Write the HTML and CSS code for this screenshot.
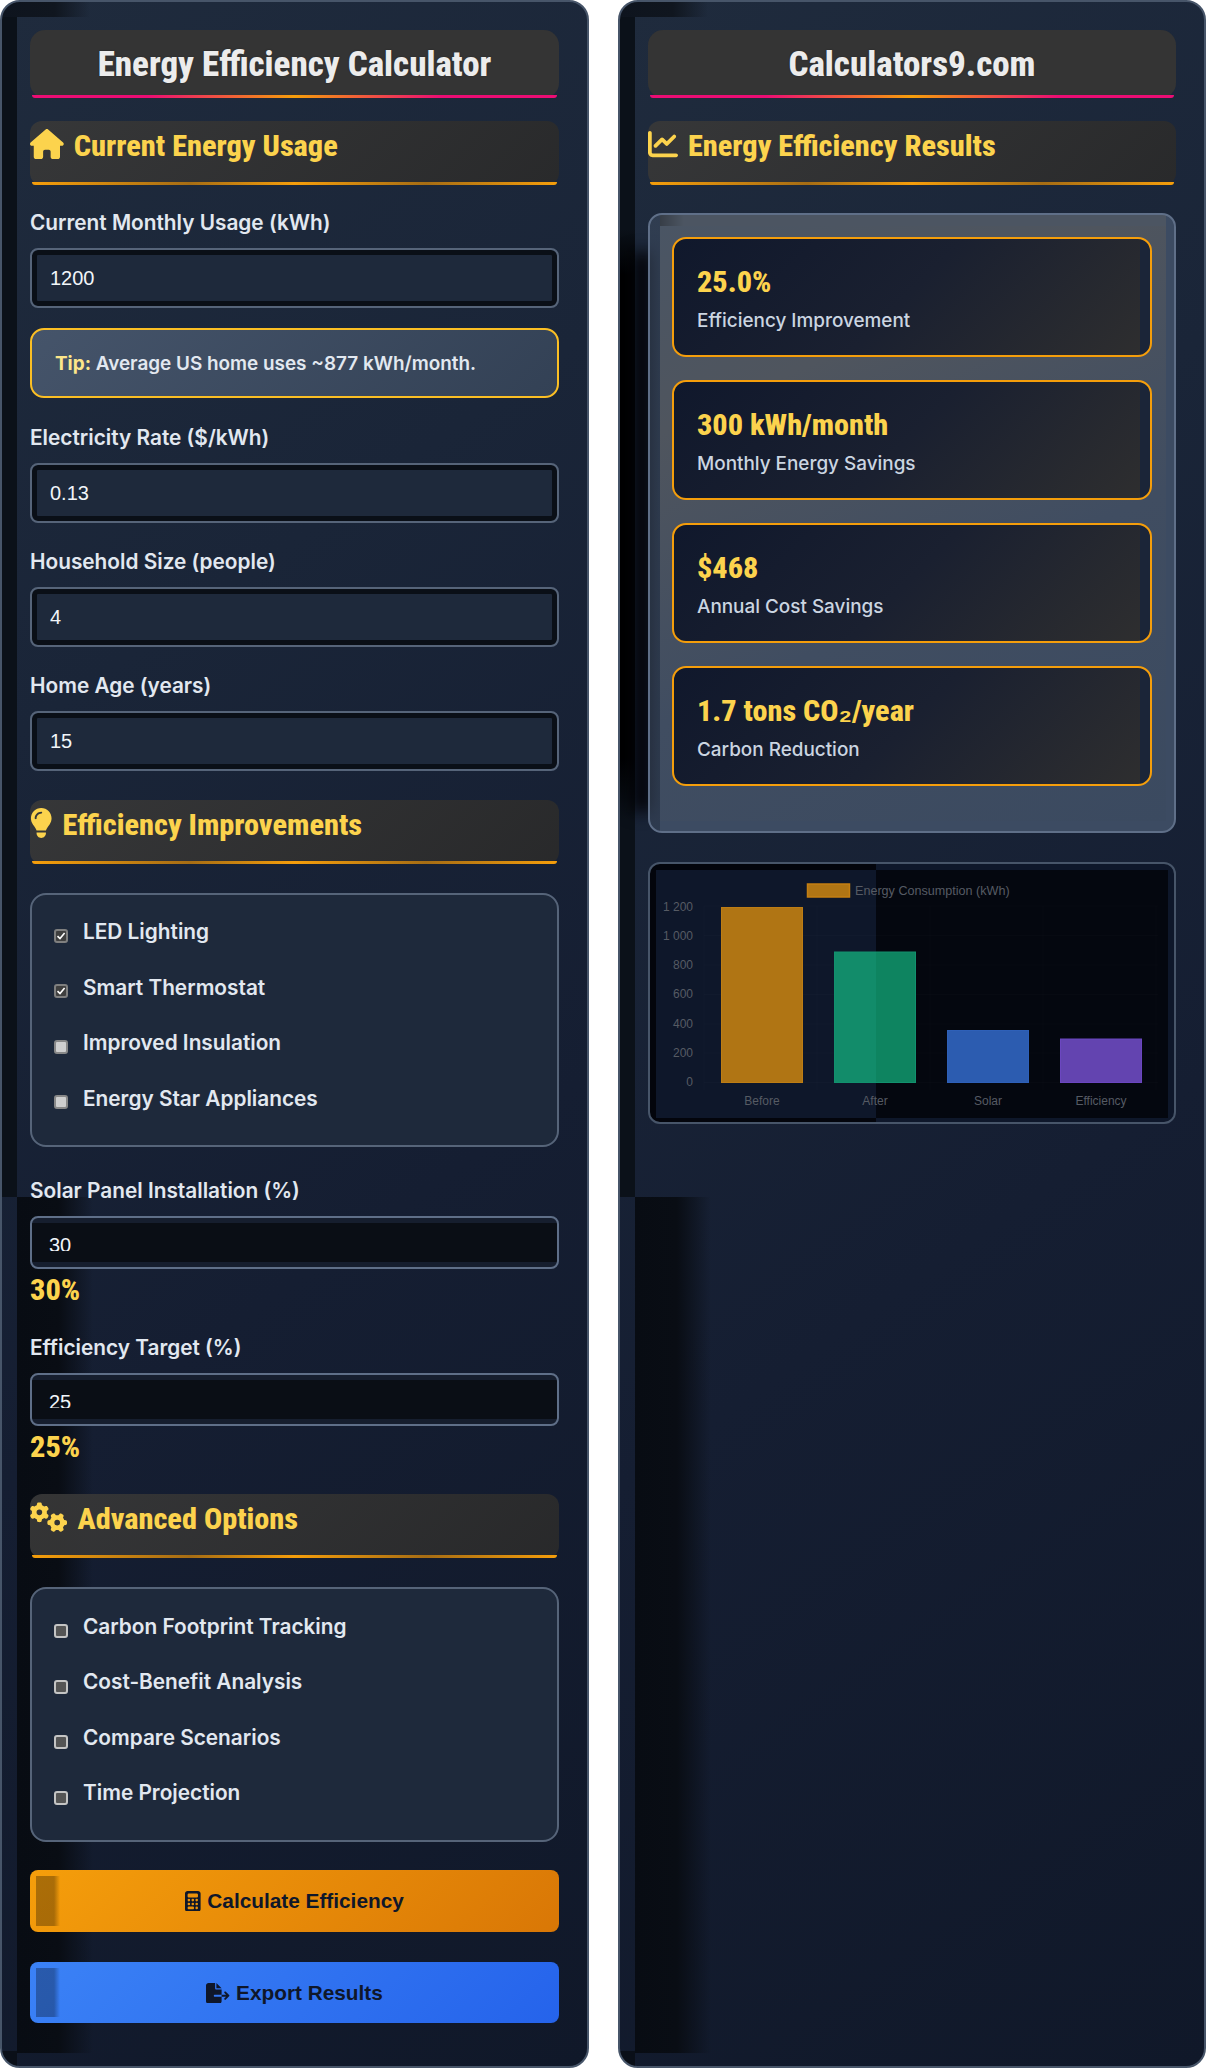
FILE: index.html
```html
<!DOCTYPE html>
<html lang="en">
<head>
<meta charset="utf-8">
<title>Energy Efficiency Calculator</title>
<link rel="stylesheet" href="styles.css">
</head>
<body>
<main class="layout">
  <section class="panel panel-left">
    <h1 class="title">Energy Efficiency Calculator</h1>
    <h2 class="section"><svg class="ico" viewBox="0 0 576 512"><path d="M575.8 255.5c0 18-15 32.1-32 32.1h-32l.7 160.2c0 2.7-.2 5.4-.5 8.1V472c0 22.1-17.9 40-40 40H456c-1.1 0-2.2 0-3.3-.1c-1.4 .1-2.8 .1-4.2 .1H416 392c-22.1 0-40-17.9-40-40V448 384c0-17.7-14.3-32-32-32H256c-17.7 0-32 14.3-32 32v64 24c0 22.1-17.9 40-40 40H160 128.1c-1.5 0-3-.1-4.5-.2c-1.2 .1-2.4 .2-3.6 .2H104c-22.1 0-40-17.9-40-40V360c0-.9 0-1.9 .1-2.8V287.6H32c-18 0-32-14-32-32.1c0-9 3-17 10-24L266.4 8c7-7 15-8 22-8s15 2 21 7L564.8 231.5c8 7 12 15 11 24z"/></svg>Current Energy Usage</h2>
    <div class="field field-first">
      <label class="label">Current Monthly Usage (kWh)</label>
      <input class="input" type="text" value="1200">
      <p class="tip"><strong>Tip:</strong> Average US home uses ~877 kWh/month.</p>
    </div>
    <div class="field">
      <label class="label">Electricity Rate ($/kWh)</label>
      <input class="input" type="text" value="0.13">
    </div>
    <div class="field">
      <label class="label">Household Size (people)</label>
      <input class="input" type="text" value="4">
    </div>
    <div class="field">
      <label class="label">Home Age (years)</label>
      <input class="input" type="text" value="15">
    </div>
    <h2 class="section section-next"><svg class="ico" viewBox="0 0 384 512"><path d="M272 384c9.6-31.9 29.5-59.1 49.2-86.2l0 0c5.2-7.1 10.4-14.2 15.4-21.4c19.8-28.5 31.4-63 31.4-100.3C368 78.8 289.2 0 192 0S16 78.8 16 176c0 37.3 11.6 71.9 31.4 100.3c5 7.2 10.2 14.3 15.4 21.4l0 0c19.8 27.1 39.7 54.4 49.2 86.2H272zM192 512c44.2 0 80-35.8 80-80V416H112v16c0 44.2 35.8 80 80 80zM112 176c0 8.8-7.2 16-16 16s-16-7.2-16-16c0-61.9 50.1-112 112-112c8.8 0 16 7.2 16 16s-7.2 16-16 16c-44.2 0-80 35.8-80 80z"/></svg>Efficiency Improvements</h2>
    <div class="checks">
      <div class="check"><span class="box on"><svg viewBox="0 0 10 10"><path d="M1.5 5.2 4 7.6 8.6 2"/></svg></span>LED Lighting</div>
      <div class="check"><span class="box on"><svg viewBox="0 0 10 10"><path d="M1.5 5.2 4 7.6 8.6 2"/></svg></span>Smart Thermostat</div>
      <div class="check"><span class="box off"></span>Improved Insulation</div>
      <div class="check"><span class="box off"></span>Energy Star Appliances</div>
    </div>
    <div class="field-range">
      <label class="label">Solar Panel Installation (%)</label>
      <div class="input input-range"><span class="range-num">30</span></div>
      <div class="range-value">30%</div>
    </div>
    <div class="field-range2">
      <label class="label">Efficiency Target (%)</label>
      <div class="input input-range"><span class="range-num">25</span></div>
      <div class="range-value">25%</div>
    </div>
    <h2 class="section section-adv"><svg class="ico" viewBox="0 0 640 512"><path d="M308.5 135.3c7.1-6.3 9.9-16.2 6.2-25c-2.3-5.3-4.8-10.5-7.6-15.5L304 89.4c-3-5-6.3-9.9-9.8-14.6c-5.7-7.6-15.7-10.1-24.7-7.1l-28.2 9.3c-10.7-8.8-23-16-36.2-20.9L199 27.1c-1.9-9.3-9.1-16.7-18.5-17.8C173.9 8.4 167.2 8 160.4 8h-.7c-6.8 0-13.5 .4-20.1 1.2c-9.4 1.1-16.6 8.6-18.5 17.8L115 56.1c-13.3 5-25.5 12.1-36.2 20.9L50.5 67.8c-9-3-19-.5-24.7 7.1c-3.5 4.7-6.8 9.6-9.9 14.6l-3 5.3c-2.8 5-5.3 10.2-7.6 15.6c-3.7 8.7-.9 18.6 6.2 25l22.2 19.8C32.6 161.9 32 168.9 32 176s.6 14.1 1.7 20.9L11.5 216.7c-7.1 6.3-9.9 16.2-6.2 25c2.3 5.3 4.8 10.5 7.6 15.6l3 5.2c3 5.1 6.3 9.9 9.9 14.6c5.7 7.6 15.7 10.1 24.7 7.1l28.2-9.3c10.7 8.8 23 16 36.2 20.9l6.1 29.1c1.9 9.3 9.1 16.7 18.5 17.8c6.7 .8 13.5 1.2 20.4 1.2s13.7-.4 20.4-1.2c9.4-1.1 16.6-8.6 18.5-17.8l6.1-29.1c13.3-5 25.5-12.1 36.2-20.9l28.2 9.3c9 3 19 .5 24.7-7.1c3.5-4.7 6.8-9.5 9.8-14.6l3.1-5.4c2.8-5 5.3-10.2 7.6-15.5c3.7-8.7 .9-18.6-6.2-25l-22.2-19.8c1.1-6.8 1.7-13.8 1.7-20.9s-.6-14.1-1.7-20.9l22.2-19.8zM112 176a48 48 0 1 1 96 0 48 48 0 1 1 -96 0zM504.7 500.5c6.3 7.1 16.2 9.9 25 6.2c5.3-2.3 10.5-4.8 15.5-7.6l5.4-3.1c5-3 9.9-6.3 14.6-9.8c7.6-5.7 10.1-15.7 7.1-24.7l-9.3-28.2c8.8-10.7 16-23 20.9-36.2l29.1-6.1c9.3-1.9 16.7-9.1 17.8-18.5c.8-6.7 1.2-13.5 1.2-20.4s-.4-13.7-1.2-20.4c-1.1-9.4-8.6-16.6-17.8-18.5L583.9 307c-5-13.3-12.1-25.5-20.9-36.2l9.3-28.2c3-9 .5-19-7.1-24.7c-4.7-3.5-9.6-6.8-14.6-9.9l-5.3-3c-5-2.8-10.2-5.3-15.6-7.6c-8.7-3.7-18.6-.9-25 6.2l-19.8 22.2c-6.8-1.1-13.8-1.7-20.9-1.7s-14.1 .6-20.9 1.7l-19.8-22.2c-6.3-7.1-16.2-9.9-25-6.2c-5.3 2.3-10.5 4.8-15.6 7.6l-5.2 3c-5.1 3-9.9 6.3-14.6 9.9c-7.6 5.7-10.1 15.7-7.1 24.7l9.3 28.2c-8.8 10.7-16 23-20.9 36.2L315.1 313c-9.3 1.9-16.7 9.1-17.8 18.5c-.8 6.7-1.2 13.5-1.2 20.4s.4 13.7 1.2 20.4c1.1 9.4 8.6 16.6 17.8 18.5l29.1 6.1c5 13.3 12.1 25.5 20.9 36.2l-9.3 28.2c-3 9-.5 19 7.1 24.7c4.7 3.5 9.5 6.8 14.6 9.8l5.4 3.1c5 2.8 10.2 5.3 15.5 7.6c8.7 3.7 18.6 .9 25-6.2l19.8-22.2c6.8 1.1 13.8 1.7 20.9 1.7s14.1-.6 20.9-1.7l19.8 22.2zM464 304a48 48 0 1 1 0 96 48 48 0 1 1 0-96z"/></svg>Advanced Options</h2>
    <div class="checks checks-adv">
      <div class="check"><span class="box dim"></span>Carbon Footprint Tracking</div>
      <div class="check"><span class="box dim"></span>Cost-Benefit Analysis</div>
      <div class="check"><span class="box dim"></span>Compare Scenarios</div>
      <div class="check"><span class="box dim"></span>Time Projection</div>
    </div>
    <button class="btn btn-calc" type="button"><svg class="btn-ico" viewBox="0 0 384 512"><path d="M64 0C28.7 0 0 28.7 0 64V448c0 35.3 28.7 64 64 64H320c35.3 0 64-28.7 64-64V64c0-35.3-28.7-64-64-64H64zM96 64H288c17.7 0 32 14.3 32 32v32c0 17.7-14.3 32-32 32H96c-17.7 0-32-14.3-32-32V96c0-17.7 14.3-32 32-32zm32 160a32 32 0 1 1 -64 0 32 32 0 1 1 64 0zM96 352a32 32 0 1 1 0-64 32 32 0 1 1 0 64zM64 416c0-17.7 14.3-32 32-32h96c17.7 0 32 14.3 32 32s-14.3 32-32 32H96c-17.7 0-32-14.3-32-32zM192 256a32 32 0 1 1 0-64 32 32 0 1 1 0 64zm32 64a32 32 0 1 1 -64 0 32 32 0 1 1 64 0zm64-64a32 32 0 1 1 0-64 32 32 0 1 1 0 64zm32 64a32 32 0 1 1 -64 0 32 32 0 1 1 64 0zM288 448a32 32 0 1 1 0-64 32 32 0 1 1 0 64z"/></svg>Calculate Efficiency</button>
    <button class="btn btn-export" type="button"><svg class="btn-ico" viewBox="0 0 576 512"><path d="M0 64C0 28.7 28.7 0 64 0H224V128c0 17.7 14.3 32 32 32H384V288H216c-13.3 0-24 10.7-24 24s10.7 24 24 24H384V448c0 35.3-28.7 64-64 64H64c-35.3 0-64-28.7-64-64V64zM384 336V288H494.1l-39-39c-9.4-9.4-9.4-24.6 0-33.9s24.6-9.4 33.9 0l80 80c9.4 9.4 9.4 24.6 0 33.9l-80 80c-9.4 9.4-24.6 9.4-33.9 0s-9.4-24.6 0-33.9l39-39H384zm0-208H256V0L384 128z"/></svg>Export Results</button>
  </section>

  <section class="panel panel-right">
    <h1 class="title">Calculators9.com</h1>
    <h2 class="section"><svg class="ico" viewBox="0 0 512 512"><path d="M64 64c0-17.7-14.3-32-32-32S0 46.3 0 64V400c0 44.2 35.8 80 80 80H480c17.7 0 32-14.3 32-32s-14.3-32-32-32H80c-8.8 0-16-7.2-16-16V64zm406.6 86.6c12.5-12.5 12.5-32.8 0-45.3s-32.8-12.5-45.3 0L320 210.7l-57.4-57.4c-12.5-12.5-32.8-12.5-45.3 0l-112 112c-12.5 12.5-12.5 32.8 0 45.3s32.8 12.5 45.3 0L240 221.3l57.4 57.4c12.5 12.5 32.8 12.5 45.3 0l128-128z"/></svg>Energy Efficiency Results</h2>
    <div class="results">
      <div class="card"><div class="card-value">25.0%</div><div class="card-label">Efficiency Improvement</div></div>
      <div class="card"><div class="card-value">300 kWh/month</div><div class="card-label">Monthly Energy Savings</div></div>
      <div class="card"><div class="card-value">$468</div><div class="card-label">Annual Cost Savings</div></div>
      <div class="card"><div class="card-value">1.7 tons CO<span class="sub">₂</span>/year</div><div class="card-label">Carbon Reduction</div></div>
    </div>
    <div class="chart">
      <svg class="chart-svg" viewBox="0 0 524 258">
        <g class="grid">
          <path d="M54 42H508M54 71.500H508M54 101H508M54 130.500H508M54 160H508M54 189H508M54 218.500H508"/>
          <path d="M54 42V226M167 42V226M280 42V226M393 42V226M506 42V226"/>
        </g>
        <rect class="swatch" x="157.500" y="20" width="42" height="13"/>
        <text class="legend" x="205" y="31">Energy Consumption (kWh)</text>
        <g class="ticks">
          <text x="43" y="46.500">1 200</text>
          <text x="43" y="76">1 000</text>
          <text x="43" y="105">800</text>
          <text x="43" y="134">600</text>
          <text x="43" y="163.500">400</text>
          <text x="43" y="193">200</text>
          <text x="43" y="221.500">0</text>
        </g>
        <rect class="bar b1" x="71.500" y="43.500" width="81" height="175"/>
        <rect class="bar b2" x="184.500" y="88" width="81" height="130.500"/>
        <rect class="bar b2b" x="226" y="88.500" width="39" height="129.500"/>
        <rect class="bar b3" x="297.500" y="166.500" width="81" height="52"/>
        <rect class="bar b4" x="410.500" y="175" width="81" height="43.500"/>
        <g class="xlabels">
          <text x="112" y="241">Before</text>
          <text x="225" y="241">After</text>
          <text x="338" y="241">Solar</text>
          <text x="451" y="241">Efficiency</text>
        </g>
      </svg>
    </div>
  </section>
</main>
</body>
</html>
```
FILE: styles.css
```css
* { box-sizing: border-box; }
html, body { margin: 0; padding: 0; }
body {
  width: 1206px;
  height: 2068px;
  background: #fff;
  font-family: "Inter", "Liberation Sans", sans-serif;
  line-height: 1.6;
  color: #e2e8f0;
  overflow: hidden;
}
.layout {
  display: grid;
  grid-template-columns: 589px 588px;
  column-gap: 29px;
  height: 2068px;
}
.panel {
  position: relative;
  isolation: isolate;
  border: 2px solid #475569;
  border-radius: 20px;
  padding: 28px;
  min-width: 0;
  display: flex;
  flex-direction: column;
  background-repeat: no-repeat;
  overflow: hidden;
}
.panel-left {
  background-image:
    linear-gradient(#0b1119, #0b1119),
    linear-gradient(90deg, #0e141e 0, #10161f 60%, rgba(16,22,31,0) 100%),
    linear-gradient(90deg, #080c13 0, #090d14 55%, rgba(9,13,20,0) 100%),
    linear-gradient(#0a0f18, #0a0f18),
    linear-gradient(145deg, #1f2b3d 0%, #1a2538 30%, #151e32 60%, #101829 100%);
  background-size: 15px 1180px, 88px 15px, 76px 856px, 15px 15px, 100% 100%;
  background-position: 0 15px, 0 0, 15px 1195px, 0 2049px, 0 0;
}
.panel-right {
  background-image:
    linear-gradient(#0b1119 0, #0b1119 18%, #000 22%, #000 62.500%, #0b1119 68%, #0b1119 100%),
    linear-gradient(90deg, #0e141e 0, #10161f 60%, rgba(16,22,31,0) 100%),
    linear-gradient(90deg, #080c13 0, #090d14 55%, rgba(9,13,20,0) 100%),
    linear-gradient(#0a0f18, #0a0f18),
    linear-gradient(145deg, #1f2b3d 0%, #1a2538 30%, #151e32 60%, #101829 100%);
  background-size: 15px 1180px, 88px 15px, 76px 856px, 15px 15px, 100% 100%;
  background-position: 0 15px, 0 0, 15px 1195px, 0 2049px, 0 0;
}
.panel-right::before {
  content: "";
  position: absolute;
  z-index: -1;
  left: 12px;
  top: 250px;
  width: 20px;
  height: 560px;
  background: #020308;
  filter: blur(8px);
}

.title {
  position: relative;
  flex: none;
  margin: 0 0 23px;
  height: 68px;
  border-radius: 15px;
  background: #343434;
  font-family: "Roboto", "Liberation Sans", sans-serif;
  font-stretch: condensed;
  font-weight: 800;
  font-size: 35px;
  line-height: 70px;
  text-align: center;
  color: #ececec;
  text-shadow: 0 0 2px rgba(0,0,0,.3);
}
.title::after {
  content: "";
  position: absolute;
  left: 2px; right: 2px; bottom: 0;
  height: 3px;
  border-radius: 0 0 10px 10px;
  background: linear-gradient(90deg, #ec0d74 0%, #ec0d74 22%, #f59e0b 50%, #ec0d74 78%, #ec0d74 100%);
}
.section {
  position: relative;
  flex: none;
  display: flex;
  align-items: flex-start;
  gap: 10px;
  margin: 0 0 22px;
  height: 64px;
  padding-top: 7px;
  border-radius: 12px;
  background: linear-gradient(135deg, rgba(56,56,56,.93), rgba(42,42,42,.93));
  font-family: "Roboto", "Liberation Sans", sans-serif;
  font-stretch: condensed;
  font-weight: 800;
  font-size: 30.300px;
  line-height: 36px;
  color: #fcd34d;
}
.section::after {
  content: "";
  position: absolute;
  left: 2px; right: 2px; bottom: 0;
  height: 3px;
  border-radius: 0 0 8px 8px;
  background: linear-gradient(90deg, #f59e0b 0%, #a66d14 30%, #f59e0b 50%, #a66d14 75%, #f59e0b 100%);
}
.section-next { margin-top: 6px; }
.section-adv { margin-top: 25px; }
.ico { height: 30px; flex: none; fill: #fcd34d; margin-top: 1px; }

.field { margin-bottom: 23px; }
.field-first { margin-bottom: 24px; }
.label {
  display: block;
  margin-bottom: 10px;
  font-weight: 600;
  font-size: 20.800px;
  line-height: 31px;
  color: #e2e8f0;
}
.input {
  display: block;
  width: 100%;
  height: 60px;
  padding: 0 18px;
  border: 2px solid #566479;
  border-radius: 8px;
  background: #1e293b;
  box-shadow: inset 0 0 0 5px #0a0f17;
  outline: none;
  font-family: "Liberation Sans", Arial, sans-serif;
  font-size: 20px;
  color: #f1f5f9;
}
.tip {
  margin: 20px 0 0;
  height: 70px;
  padding: 0 23px;
  border: 2px solid #fbbf24;
  border-radius: 14px;
  background: linear-gradient(135deg, #45546a, #334155);
  font-weight: 600;
  font-size: 18.900px;
  line-height: 68px;
  color: #e2e8f0;
}
.tip strong { font-weight: 700; color: #fde68a; }
.checks {
  flex: none;
  margin-top: 7px;
  height: 254px;
  padding: 9px 22px 0;
  border: 2px solid #566479;
  border-radius: 16px;
  background: #1e293b;
}
.check {
  display: flex;
  align-items: center;
  height: 55.500px;
  gap: 15px;
  font-weight: 600;
  font-size: 20.800px;
  color: #e2e8f0;
}
.box {
  display: block;
  flex: none;
  width: 14px;
  height: 14px;
  margin-top: 8px;
  border: 2px solid #8a8a8a;
  border-radius: 3px;
  background: #d4d4d4;
}
.box svg { display: block; width: 10px; height: 10px; fill: none; stroke: #fff; stroke-width: 1.600; }
.box.on { background: #3f3f3f; border-color: #7f7f7f; }
.box.off { background: #cfcfcf; border-color: #888; }
.box.dim { background: #555; border-color: #c4c4c4; margin-top: 10px; }

.field-range { margin: 27.500px 0 0; }
.field-range2 { margin: 20px 0 0; }
.input-range {
  height: 53px;
  padding: 20px 17px 0;
  border-color: #5f6f88;
  box-shadow: none;
  background:
    linear-gradient(#161e2e, #161e2e) 0 0 / 100% 5px no-repeat,
    linear-gradient(#161e2e, #161e2e) 0 100% / 100% 5px no-repeat,
    linear-gradient(#0a0e15, #0a0e15);
}
.range-num {
  display: block;
  height: 13.500px;
  line-height: 15px;
  overflow: hidden;
}
.range-value {
  margin-bottom: 2px;
  font-family: "Roboto", "Liberation Sans", sans-serif;
  font-stretch: condensed;
  font-weight: 800;
  font-size: 30.300px;
  line-height: 41px;
  color: #fcd34d;
}
.checks-adv { margin-top: 7px; height: 255px; padding-top: 10px; }
.btn {
  display: flex;
  align-items: center;
  justify-content: center;
  gap: 6.500px;
  border: 0;
  border-radius: 8px;
  width: 100%;
  flex: none;
  font-family: "Liberation Sans", Arial, sans-serif;
  font-weight: 700;
  font-size: 20.800px;
  color: #0f172a;
}
.btn-ico { height: 20.800px; fill: #0f172a; flex: none; }
.btn-calc {
  height: 62px;
  margin-top: 28px;
  padding-top: 2px;
  background:
    linear-gradient(90deg, rgba(0,0,0,.3) 0, rgba(0,0,0,.3) 75%, rgba(0,0,0,0) 100%) 6px 6px / 24px 50px no-repeat,
    linear-gradient(135deg, #f59e0b, #d97706);
}
.btn-export {
  height: 61px;
  margin-top: 30px;
  padding-top: 3px;
  background:
    linear-gradient(90deg, rgba(0,0,0,.3) 0, rgba(0,0,0,.3) 75%, rgba(0,0,0,0) 100%) 6px 6px / 24px 49px no-repeat,
    linear-gradient(135deg, #3b82f6, #2563eb);
}

.results {
  flex: none;
  height: 620px;
  margin-top: 6px;
  padding: 22px 22px 0;
  border: 2px solid #5f6f88;
  border-radius: 14px;
  background:
    linear-gradient(90deg, rgba(0,0,0,.28), rgba(0,0,0,0)) 10px 0 / 24px 11px no-repeat,
    linear-gradient(#4c5562, #4c5562) 10px 0 / 506px 11px no-repeat,
    linear-gradient(155deg, #4a5564 0%, #4f555e 25%, #404d61 60%, #3b4a60 100%) 10px 11px / 506px 595px no-repeat,
    linear-gradient(rgba(63,77,98,.55), rgba(63,77,98,.55)) 0 0 / 10px 100% no-repeat,
    linear-gradient(#3c4b62, #3c4b62) 516px 0 / 10px 100% no-repeat,
    linear-gradient(#3c4b62, #3c4b62) 10px 606px / 506px 14px no-repeat;
}
.card {
  height: 120px;
  margin-bottom: 23px;
  padding: 18px 23px 0;
  border: 2px solid #f59e0b;
  border-radius: 14px;
  background:
    linear-gradient(135deg, #10182c 0%, #1a2030 50%, #2e2e2f 100%) 0 0 / 466px 100% no-repeat,
    #1b2538;
}
.card-value {
  font-family: "Roboto", "Liberation Sans", sans-serif;
  font-stretch: condensed;
  font-weight: 800;
  font-size: 30.200px;
  line-height: 50px;
  color: #fcd34d;
}
.sub { font-family: "Liberation Sans", sans-serif; font-stretch: normal; font-weight: 700; }
.card-label {
  font-weight: 500;
  font-size: 18.900px;
  line-height: 28px;
  color: #cbd5e1;
}
.chart {
  flex: none;
  height: 262px;
  margin-top: 29px;
  border: 2px solid #475569;
  border-radius: 12px;
  background:
    linear-gradient(90deg, #0e172a 0, #0e172a 220px, #04070f 220px, #04070f 100%) 6px 6px / 512px 248px no-repeat,
    linear-gradient(90deg, #03050c 0, #03050c 226px, #0e172a 226px, #0e172a 100%);
}
.chart-svg { display: block; width: 524px; height: 258px; }
.grid path { fill: none; stroke: #ffffff; stroke-opacity: .015; stroke-width: 1; }
.swatch { fill: #b07514; stroke: #c47f12; stroke-width: 1.500; }
.legend { font-family: "Liberation Sans", Arial, sans-serif; font-size: 12.600px; fill: #565b64; }
.ticks text { font-family: "Liberation Sans", Arial, sans-serif; font-size: 12px; fill: #565b64; text-anchor: end; }
.xlabels text { font-family: "Liberation Sans", Arial, sans-serif; font-size: 12px; fill: #565b64; text-anchor: middle; }
.bar { stroke-width: 1; }
.b1 { fill: #b07514; stroke: #bd7d14; }
.b2 { fill: #128c6a; stroke: #12916e; }
.b2b { fill: #0e8460; stroke: none; }
.b3 { fill: #2c5cb0; stroke: #2e60b8; }
.b4 { fill: #6344b0; stroke: #6b46c0; }
```
